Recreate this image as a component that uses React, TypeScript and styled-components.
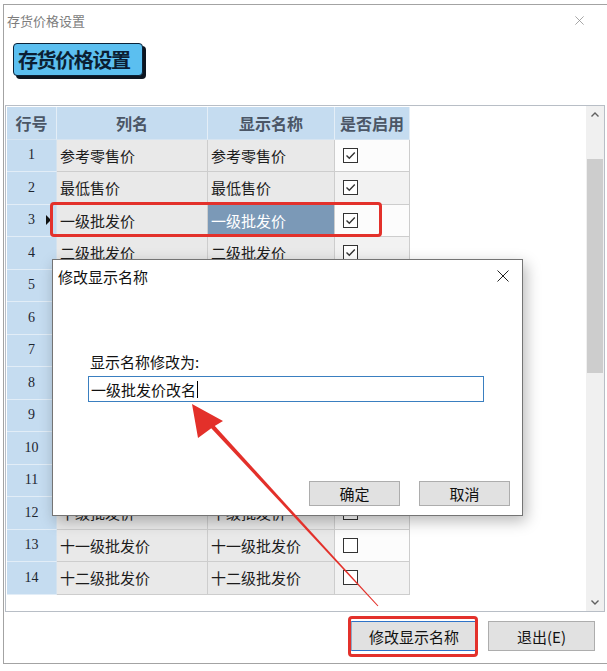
import React from "react";
import styled, { createGlobalStyle } from "styled-components";

const GlobalStyle = createGlobalStyle`
  html, body { margin: 0; padding: 0; background: #ffffff; }
  body { font-family: "Noto Sans CJK SC", "Noto Sans", sans-serif; }
  * { box-sizing: border-box; }
`;

const Page = styled.div`
  position: relative;
  width: 607px;
  height: 671px;
  overflow: hidden;
  background: #fff;
`;

const Window = styled.div`
  margin: 4px 0 0 3px;
  width: 604px;
  height: 660px;
  border: 1px solid #a3a3a3;
  border-right: none;
  display: flex;
  flex-direction: column;
  background: #fff;
`;

const TitleBar = styled.div`
  height: 31px;
  flex: none;
  display: flex;
  align-items: center;
  justify-content: space-between;
  padding: 0 23px 0 3px;
  font-size: 13px;
  color: #7d7d7d;
`;

const BannerRow = styled.div`
  flex: none;
  padding: 7px 0 0 9px;
`;

const Banner = styled.div`
  display: inline-flex;
  align-items: center;
  width: 130px;
  height: 33px;
  padding-left: 4px;
  border: 1px solid #0b2238;
  border-radius: 4px;
  background: #5bbff0;
  box-shadow: 3px 3px 0 #0d1520;
  font-size: 20px;
  font-weight: 700;
  letter-spacing: -1.4px;
  color: #0b1e33;
`;

const Panel = styled.div`
  flex: none;
  margin: 29px 2px 0 1px;
  height: 507px;
  border: 1px solid #b8bec6;
  display: flex;
`;

const GridArea = styled.div`
  flex: 1;
  padding: 1px;
`;

const Grid = styled.div`
  display: flex;
  flex-direction: column;
  width: 403px;
`;

const Row = styled.div`
  display: grid;
  grid-template-columns: 50px 151px 127px 75px;
  height: 32.5px;
`;

const HeadCell = styled.div`
  display: flex;
  align-items: center;
  justify-content: center;
  background: #c5dcf0;
  border-right: 1px solid #e4eef7;
  border-bottom: 1px solid #d6e4f1;
  font-size: 16px;
  font-weight: 700;
  color: #4b5666;
`;

const RowHead = styled.div`
  position: relative;
  display: flex;
  align-items: center;
  justify-content: center;
  background: #c5dcf0;
  border-right: 1px solid #d4e2ee;
  border-bottom: 1px solid #e2edf7;
  font-family: "Liberation Serif", "DejaVu Serif", serif;
  font-size: 14px;
  color: #1e2630;
`;

const Marker = styled.span`
  position: absolute;
  right: 5px;
  top: 50%;
  margin-top: -5px;
  width: 0;
  height: 0;
  border-top: 5px solid transparent;
  border-bottom: 5px solid transparent;
  border-left: 5px solid #111;
`;

const TextCell = styled.div<{ $selected?: boolean }>`
  display: flex;
  align-items: center;
  padding-left: 3px;
  background: ${(p) => (p.$selected ? "#7b99b7" : "#e9e9e9")};
  color: ${(p) => (p.$selected ? "#ffffff" : "#1c1c1c")};
  border-right: 1px solid #cdcdcd;
  border-bottom: 1px solid #cdcdcd;
  font-size: 15px;
  white-space: nowrap;
`;

const CheckCell = styled.div<{ $alt?: boolean }>`
  display: flex;
  align-items: center;
  padding-left: 8px;
  background: ${(p) => (p.$alt ? "#f2f2f2" : "#fcfcfc")};
  border-right: 1px solid #cdcdcd;
  border-bottom: 1px solid #cdcdcd;
`;

const Box = styled.span`
  display: inline-flex;
  align-items: center;
  justify-content: center;
  width: 15px;
  height: 15px;
  border: 1px solid #333;
  background: #fff;
`;

const ScrollBar = styled.div`
  flex: none;
  width: 18px;
  display: flex;
  flex-direction: column;
  align-items: center;
  background: #f0f0f0;
`;

const ScrollArrow = styled.div`
  height: 17px;
  width: 100%;
  display: flex;
  align-items: center;
  justify-content: center;
  flex: none;
`;

const ScrollTrack = styled.div`
  flex: 1;
  width: 100%;
  padding: 36px 1px 0 1px;
`;

const Thumb = styled.div`
  height: 214px;
  background: #cdcdcd;
`;

const BottomBar = styled.div`
  flex: 1;
  display: flex;
  justify-content: flex-end;
  align-items: flex-start;
  gap: 11px;
  padding: 9px 12px 0 0;
`;

const WinButton = styled.button<{ $focused?: boolean; $w: number }>`
  width: ${(p) => p.$w}px;
  height: 30px;
  background: #e1e1e1;
  border: 1px solid ${(p) => (p.$focused ? "#2f73c8" : "#adadad")};
  border-left-color: ${(p) => (p.$focused ? "#8fa9c8" : "#adadad")};
  border-right-color: ${(p) => (p.$focused ? "#8fa9c8" : "#adadad")};
  font-family: "Noto Sans CJK SC", sans-serif;
  font-size: 15px;
  color: #111;
  padding: 0;
  display: flex;
  align-items: center;
  justify-content: center;
`;

const Dialog = styled.div`
  position: absolute;
  left: 52px;
  top: 259px;
  width: 471px;
  height: 257px;
  background: #fff;
  border: 1px solid #747474;
  box-shadow: 3px 5px 14px rgba(0, 0, 0, 0.28);
  display: flex;
  flex-direction: column;
`;

const DialogTitle = styled.div`
  height: 32px;
  flex: none;
  display: flex;
  align-items: center;
  justify-content: space-between;
  padding: 0 13px 0 5px;
  font-size: 15px;
  color: #111;
`;

const DialogBody = styled.div`
  flex: 1;
  padding: 60px 38px 0 35px;
  display: flex;
  flex-direction: column;
`;

const FieldLabel = styled.div`
  height: 20px;
  line-height: 20px;
  padding-left: 2px;
  font-size: 15px;
  color: #111;
`;

const FieldBox = styled.div`
  margin-top: 4px;
  height: 26px;
  border: 1px solid #3a7fc0;
  display: flex;
  align-items: center;
  padding-left: 2px;
  font-size: 15px;
  color: #111;
`;

const Caret = styled.span`
  display: inline-block;
  width: 1px;
  height: 17px;
  background: #000;
  margin-left: 1px;
`;

const DialogFooter = styled.div`
  flex: none;
  display: flex;
  justify-content: flex-end;
  gap: 19px;
  padding: 0 12px 9px 0;
`;

const DlgButton = styled.button`
  width: 91px;
  height: 25px;
  background: #e1e1e1;
  border: 1px solid #adadad;
  font-family: "Noto Sans CJK SC", sans-serif;
  font-size: 15px;
  color: #111;
  padding: 0;
  display: flex;
  align-items: center;
  justify-content: center;
`;

const RowHighlight = styled.div`
  position: absolute;
  left: 50px;
  top: 202px;
  width: 332px;
  height: 35px;
  border: 3px solid #e3312b;
  border-radius: 4px;
  pointer-events: none;
`;

const ButtonHighlight = styled.div`
  position: absolute;
  left: 348px;
  top: 616px;
  width: 130px;
  height: 41px;
  border: 3px solid #e3312b;
  border-radius: 4px;
  pointer-events: none;
`;

const ArrowLayer = styled.svg`
  position: absolute;
  left: 0;
  top: 0;
  width: 607px;
  height: 671px;
  pointer-events: none;
`;

const CloseIcon = ({ size, color }: { size: number; color: string }) => (
  <svg width={size} height={size} viewBox="0 0 12 12">
    <path d="M0.5 0.5 L11.5 11.5 M11.5 0.5 L0.5 11.5" stroke={color} strokeWidth="1" fill="none" />
  </svg>
);

const Chevron = ({ up }: { up?: boolean }) => (
  <svg width="8" height="5" viewBox="0 0 8 5">
    <path
      d={up ? "M0.5 4.5 L4 1 L7.5 4.5" : "M0.5 0.5 L4 4 L7.5 0.5"}
      stroke="#606060"
      strokeWidth="1.4"
      fill="none"
    />
  </svg>
);

const Check = () => (
  <svg width="13" height="13" viewBox="0 0 13 13">
    <path d="M2.5 6.5 L5.3 9.3 L10.8 3.6" stroke="#333" strokeWidth="1.4" fill="none" />
  </svg>
);

type Item = { name: string; display: string; on: boolean };

const items: Item[] = [
  { name: "参考零售价", display: "参考零售价", on: true },
  { name: "最低售价", display: "最低售价", on: true },
  { name: "一级批发价", display: "一级批发价", on: true },
  { name: "二级批发价", display: "二级批发价", on: true },
  { name: "三级批发价", display: "三级批发价", on: false },
  { name: "四级批发价", display: "四级批发价", on: false },
  { name: "五级批发价", display: "五级批发价", on: false },
  { name: "六级批发价", display: "六级批发价", on: false },
  { name: "七级批发价", display: "七级批发价", on: false },
  { name: "八级批发价", display: "八级批发价", on: false },
  { name: "九级批发价", display: "九级批发价", on: false },
  { name: "十级批发价", display: "十级批发价", on: false },
  { name: "十一级批发价", display: "十一级批发价", on: false },
  { name: "十二级批发价", display: "十二级批发价", on: false },
];

export default function App() {
  return (
    <Page>
      <GlobalStyle />
      <Window>
        <TitleBar>
          <span>存货价格设置</span>
          <CloseIcon size={9} color="#8a8a8a" />
        </TitleBar>
        <BannerRow>
          <Banner>存货价格设置</Banner>
        </BannerRow>
        <Panel>
          <GridArea>
            <Grid>
              <Row>
                <HeadCell>行号</HeadCell>
                <HeadCell>列名</HeadCell>
                <HeadCell>显示名称</HeadCell>
                <HeadCell>是否启用</HeadCell>
              </Row>
              {items.map((it, i) => (
                <Row key={i}>
                  <RowHead>
                    {i + 1}
                    {i === 2 && <Marker />}
                  </RowHead>
                  <TextCell>{it.name}</TextCell>
                  <TextCell $selected={i === 2}>{it.display}</TextCell>
                  <CheckCell $alt={i % 2 === 1}>
                    <Box>{it.on && <Check />}</Box>
                  </CheckCell>
                </Row>
              ))}
            </Grid>
          </GridArea>
          <ScrollBar>
            <ScrollArrow>
              <Chevron up />
            </ScrollArrow>
            <ScrollTrack>
              <Thumb />
            </ScrollTrack>
            <ScrollArrow>
              <Chevron />
            </ScrollArrow>
          </ScrollBar>
        </Panel>
        <BottomBar>
          <WinButton $focused $w={126}>修改显示名称</WinButton>
          <WinButton $w={107}>退出(E)</WinButton>
        </BottomBar>
      </Window>

      <RowHighlight />
      <ButtonHighlight />

      <Dialog>
        <DialogTitle>
          <span>修改显示名称</span>
          <CloseIcon size={12} color="#222" />
        </DialogTitle>
        <DialogBody>
          <FieldLabel>显示名称修改为:</FieldLabel>
          <FieldBox>
            一级批发价改名
            <Caret />
          </FieldBox>
        </DialogBody>
        <DialogFooter>
          <DlgButton>确定</DlgButton>
          <DlgButton>取消</DlgButton>
        </DialogFooter>
      </Dialog>

      <ArrowLayer viewBox="0 0 607 671">
        <polygon
          points="210.5,427.4 213.5,424.6 378.4,605.7 377.6,606.3"
          fill="#e3302a"
        />
        <polygon points="192,404 223,421 213,427 198,438" fill="#e3302a" />
      </ArrowLayer>
    </Page>
  );
}
